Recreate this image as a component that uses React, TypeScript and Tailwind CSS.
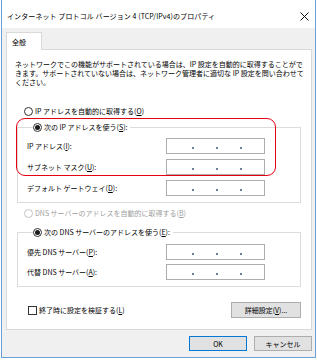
import React from "react";

const font = { fontFamily: '"Noto Sans CJK JP", "Noto Sans", sans-serif' };

function U({ children }: { children: React.ReactNode }) {
  return <span className="underline decoration-1 underline-offset-[1px]">{children}</span>;
}

function Radio({ checked, disabled }: { checked?: boolean; disabled?: boolean }) {
  return (
    <span
      className={
        disabled
          ? "flex h-[9px] w-[9px] shrink-0 items-center justify-center rounded-full border border-[#c4c4c4] bg-white"
          : "flex h-[9px] w-[9px] shrink-0 items-center justify-center rounded-full border border-[#333333] bg-white"
      }
    >
      {checked && <span className="h-[5px] w-[5px] rounded-full bg-[#1a1a1a]" />}
    </span>
  );
}

function IpBox() {
  return (
    <div className="flex h-[16px] w-[99px] items-center gap-[22px] border border-[#adadad] bg-white pl-[25px]">
      <span className="mt-[3px] h-[2px] w-[2px] bg-[#6b7f99]" />
      <span className="mt-[3px] h-[2px] w-[2px] bg-[#6b7f99]" />
      <span className="mt-[3px] h-[2px] w-[2px] bg-[#6b7f99]" />
    </div>
  );
}

function Field({ label }: { label: React.ReactNode }) {
  return (
    <div className="flex h-[16px] items-center">
      <span className="w-[139px] leading-[10px]">{label}</span>
      <IpBox />
    </div>
  );
}

export default function App() {
  return (
    <div className="h-[360px] w-[317px] bg-white text-[7px] text-black" style={font}>
      <div className="ml-[1px] flex h-[358px] w-[315px] flex-col border-x border-b border-[#6a9fd8] bg-[#f0f0f0]">
        {/* title bar */}
        <div className="flex h-[28px] items-center justify-between bg-white pl-[5px] pr-[4px] pt-[4px]">
          <span className="leading-[10px] whitespace-nowrap tracking-[0.1px]">インターネット プロトコル バージョン 4 (TCP/IPv4)のプロパティ</span>
          <svg width="9" height="9" viewBox="0 0 9 9" className="mr-[2px]">
            <path d="M0.5 0.5 L8.5 8.5 M8.5 0.5 L0.5 8.5" stroke="#111" strokeWidth="1" />
          </svg>
        </div>

        {/* tab */}
        <div className="ml-[4px] pt-[4px]">
          <div className="relative z-10 -mb-[1px] flex h-[18px] w-[36px] items-center border-x border-t border-[#d9d9d9] bg-white pl-[5px] pt-[1px]">
            全般
          </div>
          <div className="relative h-[281px] w-[306px] border border-[#d9d9d9] bg-white pl-[8px] pr-[10px] pt-[10px]">
            <p className="whitespace-nowrap leading-[9px]">
              ネットワークでこの機能がサポートされている場合は、IP 設定を自動的に取得することがで
              <br />
              きます。サポートされていない場合は、ネットワーク管理者に適切な IP 設定を問い合わせて
              <br />
              ください。
            </p>

            <div className="ml-[9px] mt-[19px] flex h-[10px] items-center gap-[2px]">
              <Radio />
              <span className="leading-[10px]">
                IP アドレスを自動的に取得する(<U>O</U>)
              </span>
            </div>

            <fieldset className="ml-[2px] mt-[6px] w-[284px] border border-[#dcdcdc] pb-[6px] pl-[9px]">
              <legend className="ml-[6px] pr-[3px]">
                <span className="flex h-[10px] items-center gap-[2px]">
                  <Radio checked />
                  <span className="leading-[10px]">
                    次の IP アドレスを使う(<U>S</U>):
                  </span>
                </span>
              </legend>
              <div className="mt-[6px] flex flex-col gap-[5px]">
                <Field label={<>IP アドレス(<U>I</U>):</>} />
                <Field label={<>サブネット マスク(<U>U</U>):</>} />
                <Field label={<>デフォルト ゲートウェイ(<U>D</U>):</>} />
              </div>
            </fieldset>

            <div className="ml-[9px] mt-[5px] flex h-[10px] items-center gap-[2px] text-[#a0a0a0]">
              <Radio disabled />
              <span className="leading-[10px]">
                DNS サーバーのアドレスを自動的に取得する(<U>B</U>)
              </span>
            </div>

            <fieldset className="ml-[2px] mt-[9px] w-[284px] border border-[#dcdcdc] pb-[6px] pl-[9px]">
              <legend className="ml-[6px] pr-[3px]">
                <span className="flex h-[10px] items-center gap-[2px]">
                  <Radio checked />
                  <span className="leading-[10px]">
                    次の DNS サーバーのアドレスを使う(<U>E</U>):
                  </span>
                </span>
              </legend>
              <div className="mt-[7px] flex flex-col gap-[4px]">
                <Field label={<>優先 DNS サーバー(<U>P</U>):</>} />
                <Field label={<>代替 DNS サーバー(<U>A</U>):</>} />
              </div>
            </fieldset>

            <div className="mt-[15px] flex h-[16px] items-center justify-between">
              <div className="ml-[13px] flex items-center gap-[2px]">
                <span className="h-[9px] w-[9px] border border-[#333333] bg-white" />
                <span className="leading-[10px]">
                  終了時に設定を検証する(<U>L</U>)
                </span>
              </div>
              <button className="flex h-[16px] w-[70px] items-center justify-center border border-[#adadad] bg-[#e1e1e1] leading-[10px]">
                詳細設定(<U>V</U>)...
              </button>
            </div>

            {/* annotation */}
            <div className="pointer-events-none absolute left-[9px] top-[68px] h-[58px] w-[260px] rounded-[9px] border-[1.5px] border-[#e60012]" />
          </div>
        </div>

        {/* dialog buttons */}
        <div className="mt-[6px] flex justify-end gap-[7px] pr-[3px]">
          <button className="flex h-[15px] w-[58px] items-center justify-center border border-[#0078d7] bg-[#e1e1e1] leading-[10px]">
            OK
          </button>
          <button className="flex h-[15px] w-[58px] items-center justify-center border border-[#adadad] bg-[#e1e1e1] leading-[10px]">
            キャンセル
          </button>
        </div>
      </div>
    </div>
  );
}
